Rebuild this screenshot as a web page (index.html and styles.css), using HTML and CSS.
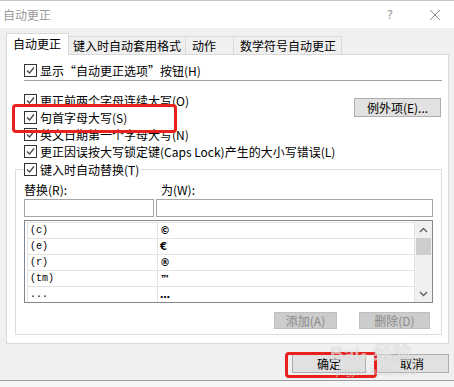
FILE: index.html
```html
<!DOCTYPE html>
<html lang="zh-CN">
  <head>
    <meta charset="utf-8" />
    <title>自动更正</title>
    <link rel="stylesheet" href="styles.css">
  </head>
  <body>
    <div class="dialog">
      <div class="titlebar">
        <span class="title">自动更正</span>
        <span class="help">?</span>
        <svg class="close" width="12" height="12" viewBox="0 0 12 12">
          <path d="M1 1 L11 11 M11 1 L1 11" stroke="#8a8a8a" stroke-width="1" fill="none" />
        </svg>
      </div>

      <div class="content">
        <div class="tabs">
          <div class="tab active">自动更正</div>
          <div class="tab">键入时自动套用格式</div>
          <div class="tab tab-short">动作</div>
          <div class="tab tab-math">数学符号自动更正</div>
        </div>

        <div class="panel">
          <label class="check">
            <span class="box"><svg width="11" height="11" viewBox="0 0 11 11"><path d="M2 5.5 L4.5 8 L9 2.5" stroke="#444" stroke-width="1.3" fill="none" /></svg></span>
            显示“自动更正选项”按钮(H)
          </label>
          <div class="separator"></div>

          <div class="options">
            <div class="option-list">
              <label class="check">
                <span class="box"><svg width="11" height="11" viewBox="0 0 11 11"><path d="M2 5.5 L4.5 8 L9 2.5" stroke="#444" stroke-width="1.3" fill="none" /></svg></span>
                更正前两个字母连续大写(O)
              </label>
              <label class="check">
                <span class="box"><svg width="11" height="11" viewBox="0 0 11 11"><path d="M2 5.5 L4.5 8 L9 2.5" stroke="#444" stroke-width="1.3" fill="none" /></svg></span>
                句首字母大写(S)
              </label>
              <label class="check">
                <span class="box"><svg width="11" height="11" viewBox="0 0 11 11"><path d="M2 5.5 L4.5 8 L9 2.5" stroke="#444" stroke-width="1.3" fill="none" /></svg></span>
                英文日期第一个字母大写(N)
              </label>
              <label class="check">
                <span class="box"><svg width="11" height="11" viewBox="0 0 11 11"><path d="M2 5.5 L4.5 8 L9 2.5" stroke="#444" stroke-width="1.3" fill="none" /></svg></span>
                更正因误按大写锁定键(Caps Lock)产生的大小写错误(L)
              </label>
            </div>
            <button class="btn exceptions">例外项(E)...</button>
          </div>

          <fieldset class="replace">
            <legend>
              <label class="check">
                <span class="box"><svg width="11" height="11" viewBox="0 0 11 11"><path d="M2 5.5 L4.5 8 L9 2.5" stroke="#444" stroke-width="1.3" fill="none" /></svg></span>
                键入时自动替换(T)
              </label>
            </legend>

            <div class="field-labels">
              <span class="label-from">替换(R):</span>
              <span>为(W):</span>
            </div>
            <div class="fields">
              <div class="input input-from"></div>
              <div class="input input-to"></div>
            </div>

            <div class="listbox">
              <table class="entries">
                <tr><td class="from">(c)</td><td class="to">©</td></tr>
                <tr><td class="from">(e)</td><td class="to">€</td></tr>
                <tr><td class="from">(r)</td><td class="to">®</td></tr>
                <tr><td class="from">(tm)</td><td class="to">™</td></tr>
                <tr><td class="from">...</td><td class="to">…</td></tr>
              </table>
              <div class="scrollbar">
                <div class="arrow">
                  <svg width="9" height="6" viewBox="0 0 9 6"><path d="M1 5 L4.5 1.5 L8 5" stroke="#606060" stroke-width="1.4" fill="none" /></svg>
                </div>
                <div class="thumb"></div>
                <div class="track"></div>
                <div class="arrow">
                  <svg width="9" height="6" viewBox="0 0 9 6"><path d="M1 1 L4.5 4.5 L8 1" stroke="#606060" stroke-width="1.4" fill="none" /></svg>
                </div>
              </div>
            </div>

            <div class="list-actions">
              <button class="btn add" disabled>添加(A)</button>
              <button class="btn remove" disabled>删除(D)</button>
            </div>
          </fieldset>
        </div>

        <div class="footer">
          <button class="btn ok">确定</button>
          <button class="btn cancel">取消</button>
        </div>
      </div>
    </div>

    <!-- annotations on top of the screenshot -->
    <div class="mark mark-option"></div>
    <div class="mark mark-ok"></div>
    <div class="watermark">
      <span class="wm-logo">Bai<span class="wm-paw">●</span> 经验</span>
      <span class="wm-url">jingyan.baidu.com</span>
    </div>
  </body>
</html>
```

FILE: styles.css
```css
* {
  margin: 0;
  padding: 0;
  box-sizing: border-box;
}
body {
  width: 454px;
  height: 387px;
  overflow: hidden;
  position: relative;
  background-color: #f6f6f6;
  font-family: "Noto Sans CJK SC", sans-serif;
  font-size: 12px;
  color: #000;
}
.dialog {
  height: 381px;
  background-color: #f0f0f0;
  border-top: 1px solid #c6c6c6;
  border-bottom: 1px solid #9c9c9c;
}

/* title bar */
.titlebar {
  height: 27px;
  display: flex;
  align-items: center;
  padding-left: 3px;
  background-color: #fff;
  color: #9a9a9a;
}
.title {
  flex: 1;
}
.help {
  font-family: "DejaVu Sans", sans-serif;
  font-size: 12px;
  color: #9a9a9a;
  margin-right: 36px;
}
.close {
  margin-right: 13px;
}

.content {
  padding: 5px 0 0 6px;
}

/* tabs */
.tabs {
  display: flex;
  align-items: flex-end;
  height: 22px;
}
.tab {
  height: 18px;
  line-height: 17px;
  margin-bottom: 1px;
  margin-left: -1px;
  padding: 0 4px;
  border: 1px solid #d9d9d9;
  border-bottom: none;
  background-color: #f0f0f0;
  white-space: nowrap;
}
.tab.active {
  height: 22px;
  line-height: 20px;
  margin: 0;
  padding: 0 7px 0 6px;
  background-color: #fff;
  position: relative;
  z-index: 1;
}
.tab-short {
  padding: 0 17px 0 6px;
}
.tab-math {
  padding: 0 5px 0 6px;
}

/* panel */
.panel {
  width: 443px;
  height: 290px;
  margin-top: -1px;
  padding: 7px 6px 0 8px;
  background-color: #fff;
  border: 1px solid #d9d9d9;
}
.check {
  display: flex;
  align-items: center;
  height: 17px;
  margin-left: 9px;
  white-space: nowrap;
}
.box {
  width: 13px;
  height: 13px;
  margin-right: 3px;
  border: 1px solid #333;
  background-color: #fff;
  display: flex;
  align-items: center;
  justify-content: center;
}
.separator {
  height: 1px;
  margin: 1px 0 0 9px;
  background-color: #a0a0a0;
}
.options {
  display: flex;
  margin-top: 11px;
}
.option-list {
  flex: 1;
}

/* buttons */
.btn {
  font-family: "Noto Sans CJK SC", sans-serif;
  font-size: 12px;
  color: #000;
  background-color: #e1e1e1;
  border: 1px solid #adadad;
  line-height: 1;
}
.btn:disabled {
  background-color: #cccccc;
  border-color: #bfbfbf;
  color: #8a8a8a;
}
.exceptions {
  width: 87px;
  height: 19px;
  margin: 6px 1px 0 0;
}

/* replace group */
.replace {
  margin-top: 1px;
  padding: 0 8px 5px 8px;
  border: 1px solid #dcdcdc;
}
.replace legend {
  padding: 0 2px 0 0;
}
.replace legend .check {
  margin-left: 0;
}
.field-labels {
  display: flex;
  height: 16px;
  line-height: 16px;
  margin-top: 4px;
}
.label-from {
  width: 137px;
}
.fields {
  display: flex;
  gap: 2px;
  margin-top: 1px;
}
.input {
  height: 18px;
  border: 1px solid #a5a5a5;
  background-color: #fff;
}
.input-from {
  width: 130px;
}
.input-to {
  flex: 1;
}

.listbox {
  display: flex;
  height: 83px;
  margin-top: 3px;
  padding: 1px 0 0 2px;
  border: 1px solid #828790;
  overflow: hidden;
}
.entries {
  flex: 1;
  border-collapse: collapse;
  align-self: flex-start;
}
.entries tr {
  height: 16px;
}
.entries td {
  border: 1px solid #e3e3e3;
  padding: 0 0 0 2px;
  line-height: 14px;
  vertical-align: middle;
}
.entries .from {
  width: 130px;
  font-family: "Liberation Mono", monospace;
  font-size: 10px;
}
.entries .to {
  font-family: "DejaVu Sans", sans-serif;
  font-size: 10px;
  font-weight: bold;
}
.scrollbar {
  width: 17px;
  margin-top: -1px;
  display: flex;
  flex-direction: column;
  background-color: #f0f0f0;
}
.arrow {
  height: 17px;
  display: flex;
  align-items: center;
  justify-content: center;
}
.thumb {
  height: 17px;
  margin: 0 1px;
  background-color: #cdcdcd;
}
.track {
  flex: 1;
}
.list-actions {
  display: flex;
  justify-content: flex-end;
  gap: 22px;
  margin-top: 9px;
}
.add,
.remove {
  height: 17px;
}
.add {
  width: 63px;
}
.remove {
  width: 71px;
  margin-right: 3px;
}

/* dialog buttons */
.footer {
  display: flex;
  justify-content: flex-end;
  gap: 9px;
  margin-top: 10px;
  padding-right: 5px;
}
.ok,
.cancel {
  width: 74px;
  height: 19px;
}

/* red annotation boxes and watermark */
.mark {
  position: absolute;
  border: 3px solid #e8201e;
  border-radius: 4px;
}
.mark-option {
  left: 12px;
  top: 104px;
  width: 165px;
  height: 29px;
}
.mark-ok {
  left: 285px;
  top: 352px;
  width: 92px;
  height: 26px;
}
.watermark {
  position: absolute;
  left: 330px;
  top: 343px;
  display: flex;
  flex-direction: column;
  color: rgba(255, 255, 255, 0.55);
  text-shadow: 0 0 1px rgba(120, 120, 120, 0.35);
  pointer-events: none;
}
.wm-logo {
  font-family: "Liberation Sans", "Noto Sans CJK SC", sans-serif;
  font-size: 19px;
  font-weight: bold;
  line-height: 22px;
}
.wm-paw {
  font-size: 14px;
}
.wm-url {
  font-family: "Liberation Sans", sans-serif;
  font-size: 10px;
  line-height: 11px;
  padding-left: 6px;
}
```
